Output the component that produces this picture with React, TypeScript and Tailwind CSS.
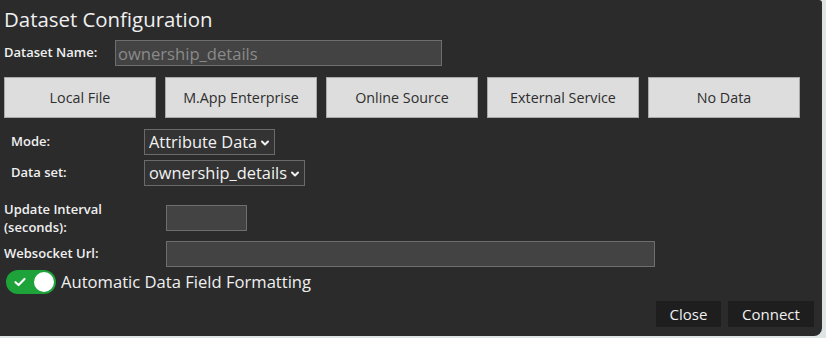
import { useState } from "react"

const SOURCES = ["Local File", "M.App Enterprise", "Online Source", "External Service", "No Data"]

function Chevron() {
    return (
        <svg width="10" height="10" viewBox="0 0 10 10" className="ml-[3px] mt-[2px] shrink-0">
            <path d="M2 3.5 L5 6.5 L8 3.5" fill="none" stroke="#f0f0f0" strokeWidth="2" strokeLinecap="round" strokeLinejoin="round" />
        </svg>
    )
}

function FakeSelect({ value }: { value: string }) {
    return (
        <div className="w-fit h-[26px] flex items-center pl-[4px] pr-[4px] bg-[#333333] border border-[#6a6a6a] text-[16.4px] text-[#f2f2f2] whitespace-nowrap">
            <span className="leading-none">{value}</span>
            <Chevron />
        </div>
    )
}

export default function App() {
    const [autoFormat, setAutoFormat] = useState(true)

    return (
        <div className="w-[826px] h-[338px] bg-[#dfe4e4] overflow-hidden" style={{ fontFamily: '"Open Sans", "Noto Sans", sans-serif' }}>
            <div className="w-[822px] h-[336px] bg-[#2b2b2b] rounded-br-[8px] rounded-tr-[3px] flex flex-col text-[#f0f0f0]">
                <h1 className="text-[20.4px] leading-[26px] pl-[4px] pt-[6px]">Dataset Configuration</h1>

                <div className="flex items-center pl-[4px] mt-[8px] h-[26px]">
                    <label className="w-[111px] text-[13px] font-semibold">Dataset Name:</label>
                    <input
                        readOnly
                        placeholder="ownership_details"
                        className="w-[327px] h-[26px] px-[2px] bg-[#434343] border border-[#6e6e6e] text-[16.6px] text-[#8a8a8a] placeholder:text-[#8a8a8a] outline-none"
                    />
                </div>

                <div className="flex gap-[9px] pl-[4px] mt-[11px]">
                    {SOURCES.map(s => (
                        <button key={s} className="w-[152px] h-[41px] bg-[#dddddd] border border-[#a9a9a9] text-[14.3px] text-[#2e2e2e]">
                            {s}
                        </button>
                    ))}
                </div>

                <div className="flex items-center pl-[11px] mt-[11px] h-[26px]">
                    <label className="w-[133px] text-[13px] font-semibold">Mode:</label>
                    <FakeSelect value="Attribute Data" />
                </div>
                <div className="flex items-center pl-[11px] mt-[5px] h-[26px]">
                    <label className="w-[133px] text-[13px] font-semibold">Data set:</label>
                    <FakeSelect value="ownership_details" />
                </div>

                <div className="flex items-center pl-[4px] mt-[14px]">
                    <label className="w-[162px] text-[13px] font-semibold leading-[18px]">Update Interval<br />(seconds):</label>
                    <input readOnly className="w-[81px] h-[26px] bg-[#434343] border border-[#6e6e6e] outline-none" />
                </div>
                <div className="flex items-center pl-[4px] mt-[5px] h-[26px]">
                    <label className="w-[162px] text-[13px] font-semibold">Websocket Url:</label>
                    <input readOnly className="w-[489px] h-[26px] bg-[#434343] border border-[#6e6e6e] outline-none" />
                </div>

                <div className="flex items-center pl-[6px] mt-[3px] h-[24px]">
                    <button
                        onClick={() => setAutoFormat(v => !v)}
                        className={`relative w-[50px] h-[24px] rounded-full ${autoFormat ? "bg-[#1ea33a]" : "bg-[#666]"}`}
                    >
                        <svg width="14" height="14" viewBox="0 0 14 14" className="absolute left-[7px] top-[5px]">
                            <path d="M2.5 7.2 L5.6 10 L11.5 4" fill="none" stroke="#fff" strokeWidth="2.2" strokeLinecap="round" strokeLinejoin="round" />
                        </svg>
                        <span className={`absolute top-[2px] w-[20px] h-[20px] rounded-full bg-white ${autoFormat ? "left-[28px]" : "left-[2px]"}`} />
                    </button>
                    <span className="ml-[5px] text-[16.6px] text-[#f0f0f0]">Automatic Data Field Formatting</span>
                </div>

                <div className="flex justify-end gap-[7px] pr-[8px] mt-auto mb-[9px]">
                    <button className="w-[65px] h-[26px] bg-[#1e1e1e] text-[15px] text-[#f0f0f0]">Close</button>
                    <button className="w-[86px] h-[26px] bg-[#1e1e1e] text-[15px] text-[#f0f0f0]">Connect</button>
                </div>
            </div>
        </div>
    )
}
